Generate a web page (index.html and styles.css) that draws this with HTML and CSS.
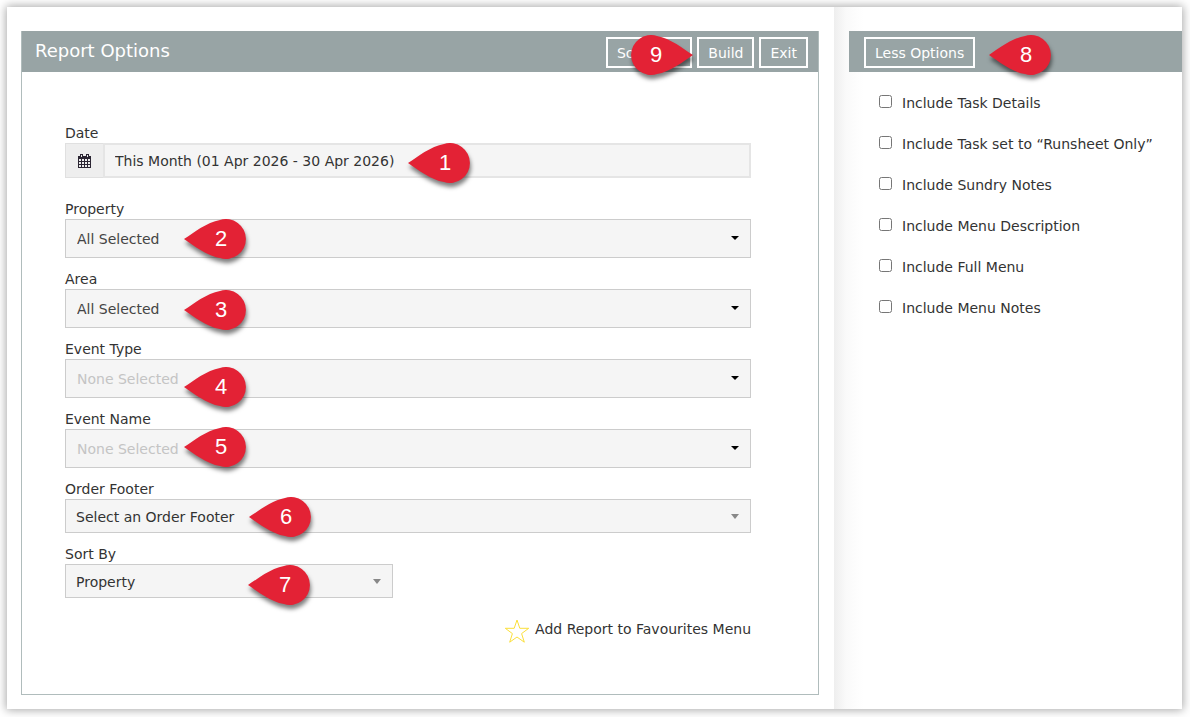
FILE: index.html
```html
<!DOCTYPE html>
<html lang="en">
  <head>
    <meta charset="UTF-8" />
    <meta
      name="viewport"
      content="width=device-width, initial-scale=1.0"
    />
    <title>Report Options</title>
    <link rel="stylesheet" href="styles.css">
  </head>
  <body>
    <svg class="sprite" aria-hidden="true">
      <symbol id="pin-left" viewBox="0 0 62 40">
        <path d="M0 20C9 14 23 3 36 .9A20 20 0 1 1 36 39.100C23 37 9 26 0 20z" />
      </symbol>
      <symbol id="pin-right" viewBox="0 0 62 40">
        <path d="M62 20C53 14 39 3 26 .9A20 20 0 1 0 26 39.100C39 37 53 26 62 20z" />
      </symbol>
    </svg>

    <div class="window">
      <main class="main">
        <form class="panel">
          <header class="bar">
            <h1 class="bar-title">Report Options</h1>
            <div class="bar-actions">
              <button class="button" type="button">Schedule</button>
              <button class="button" type="button">Build</button>
              <button class="button" type="button">Exit</button>
              <span class="pin pin-right pin-9"><svg><use href="#pin-right" /></svg><b>9</b></span>
            </div>
          </header>

          <div class="fields">
            <div class="field field-date">
              <label for="date">Date</label>
              <div class="control date">
                <span class="date-icon">
                  <svg width="13" height="14" viewBox="0 0 13 14">
                    <path d="M0 2h13v12H0z" fill="#2b2533" />
                    <path d="M1 5h2v2H1zM4 5h2v2H4zM7 5h2v2H7zM10 5h2v2h-2zM1 8h2v2H1zM4 8h2v2H4zM7 8h2v2H7zM10 8h2v2h-2zM1 11h2v2H1zM4 11h2v2H4zM7 11h2v2H7zM10 11h2v2h-2z" fill="#eee" />
                    <path d="M2 0h3v4H2zM8 0h3v4H8z" fill="#2b2533" />
                    <path d="M3 1h1v2H3zM9 1h1v2H9z" fill="#eee" />
                  </svg>
                </span>
                <input id="date" class="date-input" type="text" value="This Month (01 Apr 2026 - 30 Apr 2026)" readonly>
                <span class="pin pin-1"><svg><use href="#pin-left" /></svg><b>1</b></span>
              </div>
            </div>

            <div class="field">
              <label for="property">Property</label>
              <div class="control arrow">
                <select id="property" class="select"><option>All Selected</option></select>
                <span class="pin pin-2"><svg><use href="#pin-left" /></svg><b>2</b></span>
              </div>
            </div>

            <div class="field">
              <label for="area">Area</label>
              <div class="control arrow">
                <select id="area" class="select"><option>All Selected</option></select>
                <span class="pin pin-3"><svg><use href="#pin-left" /></svg><b>3</b></span>
              </div>
            </div>

            <div class="field">
              <label for="event-type">Event Type</label>
              <div class="control arrow">
                <select id="event-type" class="select select-empty"><option>None Selected</option></select>
                <span class="pin pin-4"><svg><use href="#pin-left" /></svg><b>4</b></span>
              </div>
            </div>

            <div class="field">
              <label for="event-name">Event Name</label>
              <div class="control arrow">
                <select id="event-name" class="select select-empty"><option>None Selected</option></select>
                <span class="pin pin-5"><svg><use href="#pin-left" /></svg><b>5</b></span>
              </div>
            </div>

            <div class="field">
              <label for="order-footer">Order Footer</label>
              <div class="control arrow arrow-grey">
                <select id="order-footer" class="select select-single"><option>Select an Order Footer</option></select>
                <span class="pin pin-6"><svg><use href="#pin-left" /></svg><b>6</b></span>
              </div>
            </div>

            <div class="field field-sort">
              <label for="sort-by">Sort By</label>
              <div class="control arrow arrow-grey">
                <select id="sort-by" class="select select-single"><option>Property</option></select>
                <span class="pin pin-7"><svg><use href="#pin-left" /></svg><b>7</b></span>
              </div>
            </div>

            <a class="favourite" href="#">
              <svg width="26" height="26" viewBox="0 1 26 26">
                <path d="M13 2l2.8 8.300h8.900l-7.100 5.300 2.700 8.600-7.300-5.200-7.300 5.200 2.700-8.600L1.300 10.300h8.900z" fill="none" stroke="#fbdf3a" />
              </svg>
              Add Report to Favourites Menu
            </a>
          </div>
        </form>
      </main>

      <aside class="side">
        <header class="bar bar-side">
          <button class="button" type="button">Less Options</button>
          <span class="pin pin-8"><svg><use href="#pin-left" /></svg><b>8</b></span>
        </header>
        <div class="checks">
          <label class="check"><input type="checkbox">Include Task Details</label>
          <label class="check"><input type="checkbox">Include Task set to “Runsheet Only”</label>
          <label class="check"><input type="checkbox">Include Sundry Notes</label>
          <label class="check"><input type="checkbox">Include Menu Description</label>
          <label class="check"><input type="checkbox">Include Full Menu</label>
          <label class="check"><input type="checkbox">Include Menu Notes</label>
        </div>
      </aside>
    </div>
  </body>
</html>
```
FILE: styles.css
```css
:root {
  --bar-color: #98a4a5;
  --text-color: #333;
  --field-color: #f5f5f5;
  --field-border: #ccc;
  --pin-color: #e32235;
}

* {
  box-sizing: border-box;
}

body {
  display: flex;
  min-height: 100vh;
  margin: 0;
  padding: 7px 8px 8px 7px;
  background: #fff;
  color: var(--text-color);
  font: 14px/20px "DejaVu Sans", Verdana, sans-serif;
}

button,
input,
select {
  font: inherit;
  color: inherit;
}

.sprite {
  position: absolute;
  width: 0;
  height: 0;
}

.window {
  flex: 1;
  display: flex;
  background: #fff;
  box-shadow: 0 0 9px 1px rgba(0, 0, 0, 0.35);
}

.main {
  flex: 1;
  display: flex;
  padding: 24px 15px 14px 14px;
}

.panel {
  flex: 1;
  border: 1px solid #b0bcbc;
  border-top: 0;
}

.bar {
  display: flex;
  align-items: flex-start;
  justify-content: space-between;
  height: 41px;
  padding: 6px 10px 0 13px;
  background: var(--bar-color);
  color: #fff;
}

.bar-title {
  margin: 0;
  font-size: 18px;
  line-height: 28px;
  font-weight: 400;
}

.bar-actions {
  position: relative;
  display: flex;
  gap: 5px;
}

.button {
  height: 31px;
  padding: 0 9px;
  border: 2px solid #fff;
  background: transparent;
  cursor: pointer;
}

.fields {
  display: flex;
  flex-direction: column;
  gap: 11px;
  padding: 51px 67px 40px 43px;
}

.field label {
  display: block;
}

.field-date {
  margin-bottom: 10px;
}

.field-sort {
  width: 328px;
}

.control {
  position: relative;
  display: flex;
}

.date {
  height: 35px;
}

.date-icon {
  display: flex;
  align-items: center;
  justify-content: center;
  width: 38px;
  border: 1px solid #e0e0e0;
  border-right: 0;
  background: #eee;
}

.date-input {
  flex: 1;
  min-width: 0;
  padding: 0 10px;
  border: 2px solid #e5e5e5;
  background: var(--field-color);
}

.select {
  width: 100%;
  height: 39px;
  padding: 0 11px;
  border: 1px solid var(--field-border);
  border-radius: 0;
  background: var(--field-color);
  color: #444;
  appearance: none;
}

.select-empty {
  color: #c4c4c4;
}

.select-single {
  height: 34px;
  padding: 2px 10px 0;
  color: var(--text-color);
}

.arrow::after {
  content: '';
  position: absolute;
  top: calc(50% - 3px);
  right: 12px;
  border: 4px solid transparent;
  border-top-color: #000;
  border-bottom: 0;
  pointer-events: none;
}

.arrow-grey::after {
  top: calc(50% - 2px);
  border-top: 5px solid #888;
}

.favourite {
  display: flex;
  align-items: flex-start;
  align-self: flex-end;
  gap: 5px;
  margin-top: 10px;
  color: inherit;
  text-decoration: none;
}

.side {
  width: 348px;
  padding: 24px 0 0 15px;
  background: linear-gradient(to right, #eee, #fafafa 12px, #fff 30px);
}

.bar-side {
  position: relative;
  padding: 6px 15px 0;
}

.checks {
  display: flex;
  flex-direction: column;
  gap: 21px;
  padding: 21px 0 21px 30px;
}

.check {
  display: flex;
  align-items: center;
  gap: 10px;
}

.check input {
  width: 13px;
  height: 13px;
  margin: 0 0 3px;
}

/* numbered pins */
.pin {
  position: absolute;
  width: 62px;
  height: 40px;
  padding-left: 12px;
  color: #fff;
  font: 22px/40px "Liberation Sans", Arial, sans-serif;
  text-align: center;
  pointer-events: none;
}

.pin svg {
  position: absolute;
  inset: 0;
  width: 62px;
  height: 40px;
  overflow: visible;
  fill: var(--pin-color);
  filter: drop-shadow(1px 4px 2px rgba(0, 0, 0, 0.5));
}

.pin b {
  position: relative;
  font-weight: 400;
}

.pin-right {
  padding: 0 12px 0 0;
}

.pin-1 {
  top: 0;
  left: 343px;
}

.pin-2 {
  top: 0;
  left: 119px;
}

.pin-3 {
  top: 1px;
  left: 119px;
}

.pin-4 {
  top: 8px;
  left: 119px;
}

.pin-5 {
  top: -2px;
  left: 119px;
}

.pin-6 {
  top: -2px;
  left: 184px;
}

.pin-7 {
  top: 1px;
  left: 183px;
}

.pin-8 {
  top: 4px;
  left: 140px;
}

.pin-9 {
  top: -2px;
  right: 115px;
}
```
